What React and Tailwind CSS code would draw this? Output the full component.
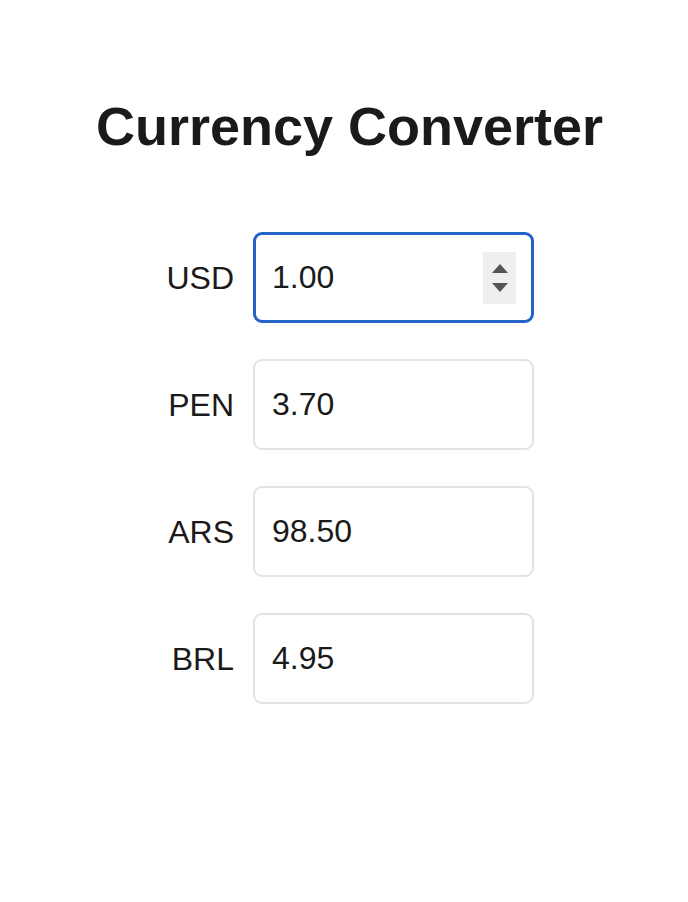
import React, { useState } from 'react'

const rates = [
  { code: 'USD', value: '1.00', focused: true },
  { code: 'PEN', value: '3.70' },
  { code: 'ARS', value: '98.50' },
  { code: 'BRL', value: '4.95' }
]

const Spinner = () => (
  <span className="absolute right-[18px] top-1/2 -translate-y-1/2 w-[33px] h-[52px] bg-[#efefef] flex flex-col items-center justify-center gap-[10px]">
    <svg width="16" height="9" viewBox="0 0 16 9">
      <path d="M8 0 L16 9 L0 9 Z" fill="#545454" />
    </svg>
    <svg width="16" height="9" viewBox="0 0 16 9">
      <path d="M0 0 L16 0 L8 9 Z" fill="#545454" />
    </svg>
  </span>
)

const App = () => {
  const [values, setValues] = useState(rates.map(r => r.value))

  return (
    <div className="min-h-screen bg-white text-[#1a1a1a] flex flex-col items-center" style={{ fontFamily: '"Liberation Sans", Arial, sans-serif' }}>
      {/* Title */}
      <h1 className="mt-[99px] pl-[11px] text-[54px] leading-[54px] font-bold">Currency Converter</h1>

      {/* Rows */}
      <div className="mt-[79px] flex flex-col gap-[36px]">
        {rates.map((rate, i) => (
          <div key={rate.code} className="flex items-center gap-[19px]">
            <label className="w-[80px] text-right text-[32px]">{rate.code}</label>
            <div className="relative">
              <input
                type="text"
                value={values[i]}
                onChange={(e) => setValues(prev => prev.map((v, j) => (j === i ? e.target.value : v)))}
                className={
                  rate.focused
                    ? 'w-[281px] h-[91px] rounded-[9px] border-[3px] border-[#2563c8] pl-[16px] text-[32px] outline-none bg-white'
                    : 'w-[281px] h-[91px] rounded-[9px] border-2 border-[#e3e3e6] pl-[17px] text-[32px] outline-none bg-white'
                }
              />
              {rate.focused && <Spinner />}
            </div>
          </div>
        ))}
      </div>
    </div>
  )
}

export default App
